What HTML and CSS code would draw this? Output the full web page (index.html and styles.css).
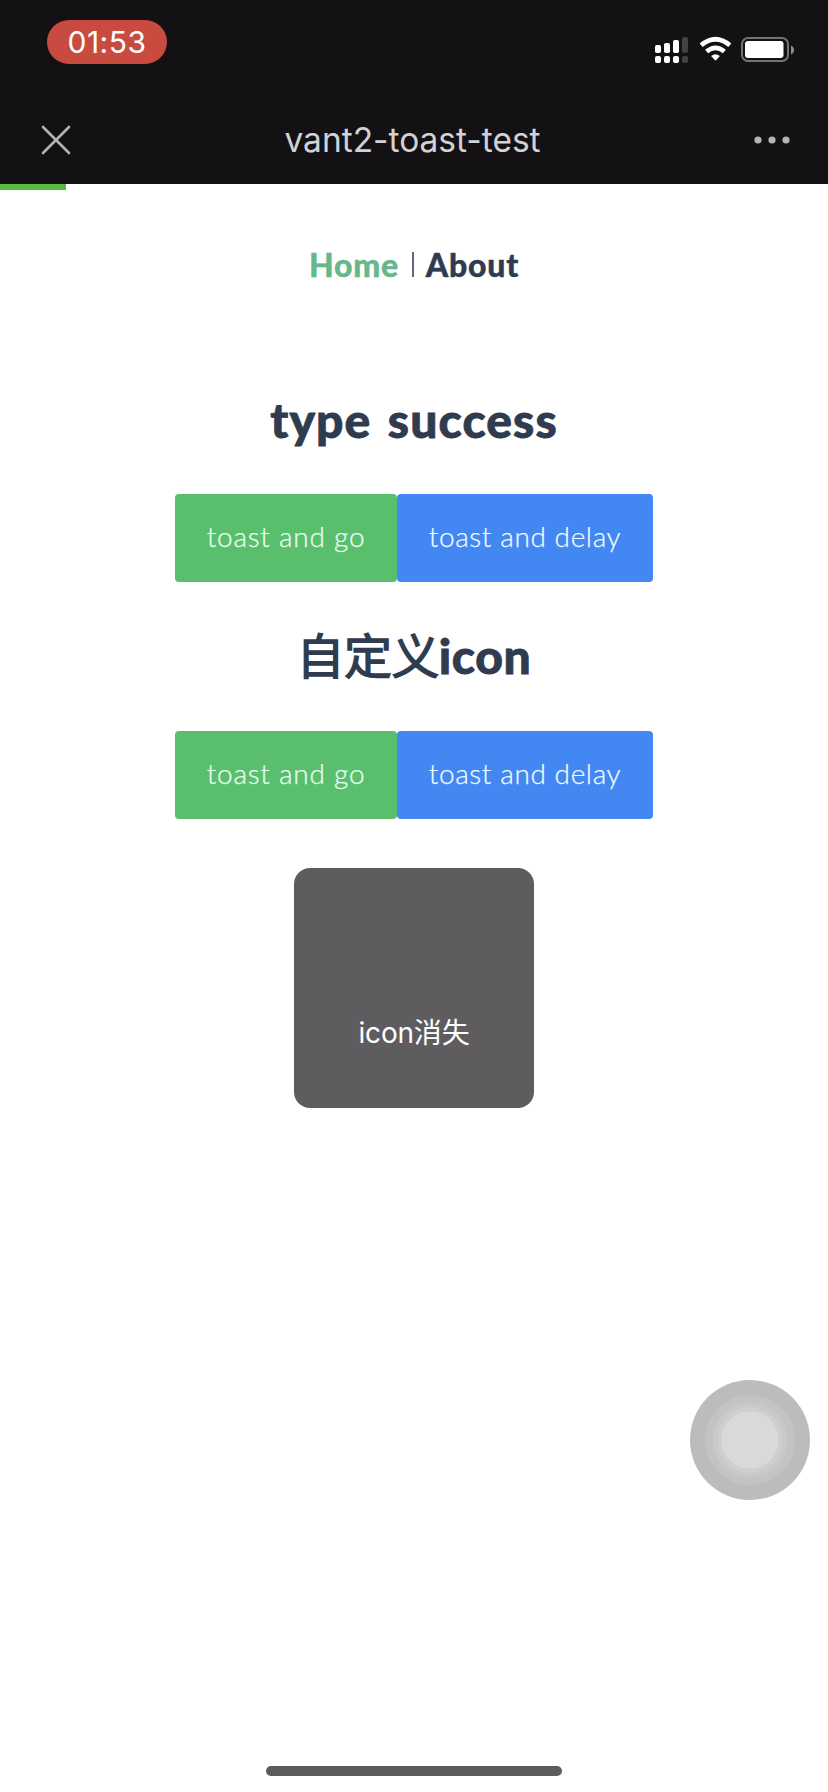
FILE: index.html
```html
<!DOCTYPE html>
<html lang="zh-CN">
<head>
<meta charset="utf-8">
<title>vant2-toast-test</title>
<link rel="stylesheet" href="styles.css">
</head>
<body>
<div class="screen">
  <header class="header">
    <div class="status">
      <span class="clock">01:53</span>
      <svg class="status-icons" width="140" height="28" viewBox="0 0 140 28">
        <g fill="#fff">
          <rect x="0" y="9" width="6" height="8" rx="1.8"/>
          <rect x="9" y="7" width="6" height="10" rx="1.8"/>
          <rect x="18" y="4" width="6" height="13" rx="1.8"/>
          <rect x="0" y="20" width="6" height="7" rx="2"/>
          <rect x="9" y="20" width="6" height="7" rx="2"/>
          <rect x="18" y="20" width="6" height="7" rx="2"/>
        </g>
        <g fill="#414043">
          <rect x="27" y="1" width="6" height="16" rx="2"/>
          <rect x="27" y="20" width="6" height="7" rx="2"/>
        </g>
        <g fill="none" stroke="#fff" stroke-width="4.6">
          <path d="M46.2 9.3Q60.5-2.8 74.8 9.3"/>
          <path d="M51.6 15.5Q60.5 8.1 69.4 15.5"/>
        </g>
        <path d="M56.1 20Q60.5 16.4 64.9 20L61.2 24.1Q60.5 24.8 59.8 24.1Z" fill="#fff"/>
        <rect x="87" y="2" width="46" height="23" rx="6" fill="none" stroke="#737275" stroke-width="2"/>
        <rect x="90" y="5" width="38.5" height="17" rx="3" fill="#fff"/>
        <path d="M136 9.5Q139 11 139 14T136 18.5Z" fill="#8b8a8d"/>
      </svg>
    </div>
    <div class="navbar">
      <svg class="close" width="30" height="30" viewBox="0 0 30 30"><path d="M2 2L28 28M28 2L2 28" stroke="#b5b4b7" stroke-width="2.6" stroke-linecap="round"/></svg>
      <span class="title">vant2-toast-test</span>
      <svg class="more" width="36" height="8" viewBox="0 0 36 8" fill="#b5b4b7"><circle cx="4" cy="4" r="3.6"/><circle cx="18" cy="4" r="3.6"/><circle cx="32" cy="4" r="3.6"/></svg>
    </div>
  </header>
  <main class="page">
    <div class="progress"></div>
    <nav class="links"><a class="home">Home</a><span class="bar"></span><a class="about">About</a></nav>
    <h1 class="heading latin">type success</h1>
    <div class="buttons"><button class="btn go">toast and go</button><button class="btn delay">toast and delay</button></div>
    <h1 class="heading mixed">自定义<span class="word">icon</span></h1>
    <div class="buttons"><button class="btn go">toast and go</button><button class="btn delay">toast and delay</button></div>
    <div class="toast"><span class="toast-text">icon消失</span></div>
    <div class="assistive"></div>
    <div class="indicator"></div>
  </main>
</div>
</body>
</html>
```
FILE: styles.css
```css
* { box-sizing: border-box; }
body { margin: 0; background: #fff; }
.screen { width: 828px; height: 1792px; display: flex; flex-direction: column; overflow: hidden; }
.header { height: 184px; background: #131114; flex: none; }
.status { height: 96px; display: flex; justify-content: space-between; padding: 20px 33px 0 47px; }
.clock { width: 120px; height: 44px; border-radius: 22px; background: #c94b40; color: #fff; font: 400 30px/45px Inter, sans-serif; letter-spacing: .5px; text-align: center; }
.status-icons { margin-top: 16px; }
.navbar { height: 88px; display: grid; grid-template-columns: 80px 1fr 80px; align-items: center; }
.close { margin: 0 0 0 41px; }
.title { text-align: center; color: #d2d1d4; font: 400 33.5px/40px Inter, sans-serif; padding-right: 3px; }
.more { margin-left: 6px; }
.page { position: relative; flex: 1; color: #2f3b4e; font-family: Lato, "Noto Sans CJK SC", sans-serif; }
.progress { width: 66px; height: 6px; background: #57bb3d; }
.links { display: flex; justify-content: center; height: 160px; padding-top: 55px; font-size: 32px; line-height: 40px; font-weight: 900; letter-spacing: .75px; -webkit-text-stroke: .4px; }
.home { color: #65b78c; }
.bar { width: 2px; height: 25px; margin: 7px 12px 0 13px; background: #606977; }
.heading { margin: 0; text-align: center; font-size: 48px; line-height: 60px; font-weight: 900; }
.latin { margin-top: 40px; letter-spacing: 1.1px; word-spacing: 4px; -webkit-text-stroke: .8px; }
.mixed { margin: 44px 0 45px; font-family: Lato, "Noto Sans CJK SC", sans-serif; font-weight: 400; -webkit-text-stroke: 1.3px; letter-spacing: -.6px; }
.word { font-weight: 900; letter-spacing: .6px; -webkit-text-stroke: .8px; }
.buttons { display: flex; justify-content: center; }
.latin + .buttons { margin-top: 44px; }
.btn { height: 88px; border: 0; border-radius: 4px; padding: 0 0 4px; color: #e9fff5; font: 300 28px/84px Lato, sans-serif; letter-spacing: .75px; -webkit-text-stroke: .25px; }
.go { width: 222px; background: #59bf6d; }
.delay { width: 256px; background: #4387f3; color: #f2fbff; letter-spacing: .6px; }
.toast { position: absolute; left: 294px; top: 684px; width: 240px; height: 240px; border-radius: 16px; background: #5e5c5f; color: #fff; display: flex; justify-content: center; align-items: flex-end; padding-bottom: 55px; }
.toast-text { font: 400 28px/40px Inter, "Noto Sans CJK SC", sans-serif; letter-spacing: -.2px; }
.assistive { position: absolute; left: 690px; top: 1196px; width: 120px; height: 120px; border-radius: 50%; background: radial-gradient(circle, #d9d8da 0 28px, #cfced0 29px 32px, #cac9ca 33px 37px, #c4c3c4 38px 44px, #bdbcbd 46px); }
.indicator { position: absolute; left: 266px; top: 1582px; width: 296px; height: 10px; border-radius: 5px; background: #5c5c5c; }
```
